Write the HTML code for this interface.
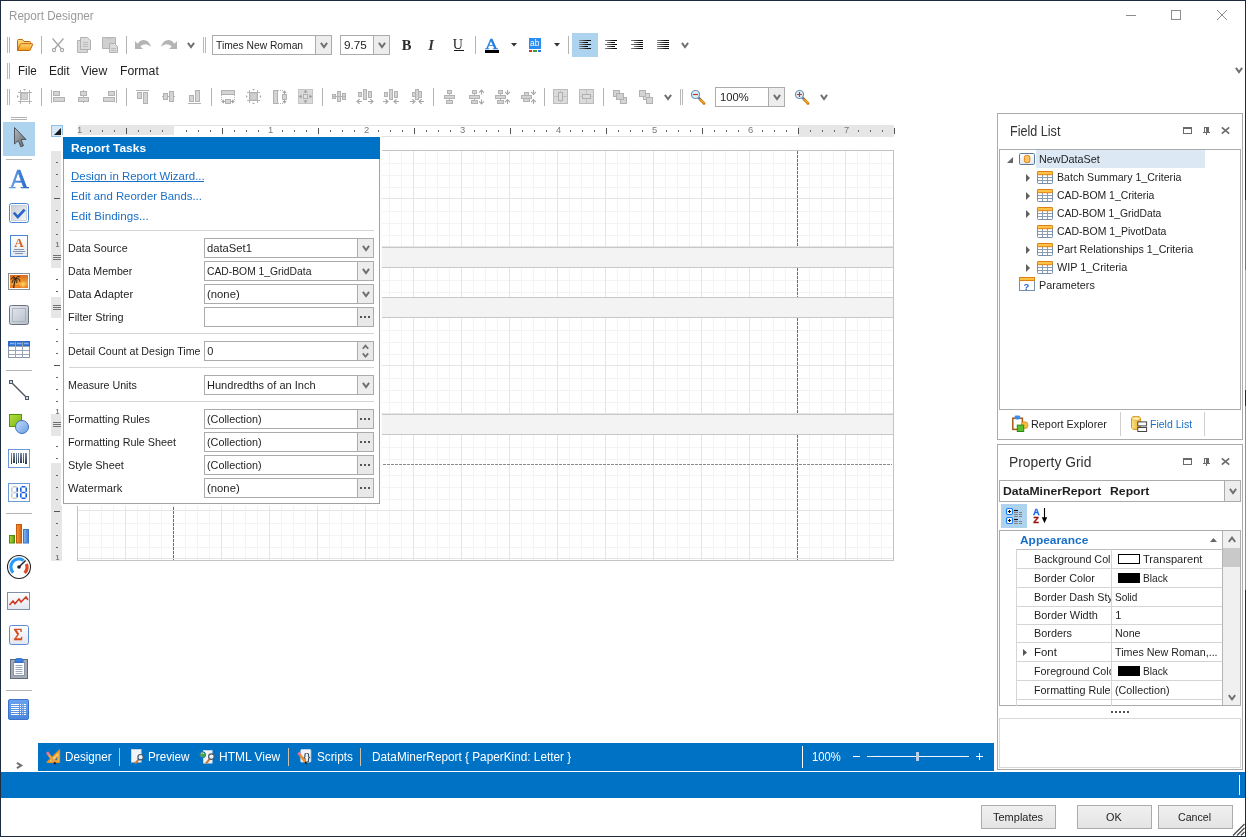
<!DOCTYPE html>
<html><head><meta charset="utf-8"><title>Report Designer</title>
<style>
html,body{margin:0;padding:0;}
body{width:1247px;height:837px;overflow:hidden;background:#fff;position:relative;font-family:"Liberation Sans",sans-serif;}
#root{position:absolute;left:0;top:0;width:1247px;height:837px;overflow:hidden;background:#fff;}
#root div,#root span,#root svg{position:absolute;box-sizing:border-box;}
#root svg{overflow:visible;}
</style></head><body><div id="root">
<div style="left:0px;top:0px;width:1247px;height:837px;background:#fff;"></div>
<div style="left:0px;top:0px;width:1246px;height:1px;background:#1c2b3e;"></div>
<div style="left:0px;top:0px;width:1px;height:837px;background:#1c2b3e;"></div>
<div style="left:1245px;top:0px;width:1px;height:837px;background:linear-gradient(180deg,#1c2b3e 0,#1c2b3e 200px,#4a82b8 200px,#4a82b8 270px,#9ab4cc 270px,#9ab4cc 390px,#1c2b3e 390px,#1c2b3e 406px,#6a9abf 406px,#6a9abf 590px,#1c2b3e 590px);"></div>
<div style="left:0px;top:836px;width:1246px;height:1px;background:#1c2b3e;"></div>
<span id="t0" style="left:8.90px;top:6.54px;font:400 12px/18px 'Liberation Sans',sans-serif;color:#999;white-space:pre;transform:scaleX(0.9694);transform-origin:0 0;">Report Designer</span>
<svg style="left:1126px;top:10px;" width="11" height="11" viewBox="0 0 11 11"><path d="M0 5.5H10" stroke="#8c8c8c" stroke-width="1" fill="none"/></svg>
<svg style="left:1171px;top:10px;" width="11" height="11" viewBox="0 0 11 11"><rect x="0.5" y="0.5" width="9" height="9" stroke="#8c8c8c" stroke-width="1" fill="none"/></svg>
<svg style="left:1217px;top:10px;" width="11" height="11" viewBox="0 0 11 11"><path d="M0 0L10 10M10 0L0 10" stroke="#8c8c8c" stroke-width="1" fill="none"/></svg>
<div style="left:7px;top:37px;width:1px;height:16px;background:#b8b8b8;"></div>
<div style="left:9px;top:37px;width:1px;height:16px;background:#b8b8b8;"></div>
<div style="left:41px;top:36px;width:1px;height:18px;background:#b4b4b4;"></div>
<div style="left:126px;top:36px;width:1px;height:18px;background:#b4b4b4;"></div>
<svg style="left:187px;top:42px;" width="8" height="7" viewBox="0 0 8 7"><path d="M0.9 0.9L4 5L7.1 0.9" stroke="#707070" stroke-width="2" fill="none"/></svg>
<div style="left:203px;top:37px;width:1px;height:16px;background:#b8b8b8;"></div>
<div style="left:205px;top:37px;width:1px;height:16px;background:#b8b8b8;"></div>
<div style="left:212px;top:35px;width:120px;height:20px;border:1px solid #ababab;background:#fff;"></div>
<div style="left:315px;top:35px;width:17px;height:20px;border:1px solid #ababab;background:#ededed;"></div>
<svg style="left:319.5px;top:41.6px;" width="8" height="7" viewBox="0 0 8 7"><path d="M0.9 0.9L4 5L7.1 0.9" stroke="#707070" stroke-width="2" fill="none"/></svg>
<span id="t1" style="left:216.15px;top:37.09px;font:400 11px/16px 'Liberation Sans',sans-serif;color:#1e1e1e;white-space:pre;transform:scaleX(0.9353);transform-origin:0 0;">Times New Roman</span>
<div style="left:340px;top:35px;width:50px;height:20px;border:1px solid #ababab;background:#fff;"></div>
<div style="left:373px;top:35px;width:17px;height:20px;border:1px solid #ababab;background:#ededed;"></div>
<svg style="left:377.5px;top:41.6px;" width="8" height="7" viewBox="0 0 8 7"><path d="M0.9 0.9L4 5L7.1 0.9" stroke="#707070" stroke-width="2" fill="none"/></svg>
<span id="t2" style="left:344.05px;top:37.09px;font:400 11px/16px 'Liberation Sans',sans-serif;color:#1e1e1e;white-space:pre;transform:scaleX(1.0690);transform-origin:0 0;">9.75</span>
<span id="t3" style="left:401.67px;top:34.11px;font:700 14.5px/22px 'Liberation Serif',serif;color:#2a2a2a;white-space:pre;">B</span>
<span id="t4" style="left:428.27px;top:34.11px;font:700 14.5px/22px 'Liberation Serif',serif;color:#333;white-space:pre;font-style:italic;">I</span>
<span id="t5" style="left:452.80px;top:34.27px;font:400 14px/21px 'Liberation Serif',serif;color:#1a1a1a;white-space:pre;">U</span>
<div style="left:454px;top:50px;width:10px;height:1px;background:#1a1a1a;"></div>
<div style="left:475px;top:36px;width:1px;height:18px;background:#b4b4b4;"></div>
<span id="t6" style="left:485.25px;top:32.64px;font:400 15px/22px 'Liberation Serif',serif;color:#1f7ae0;white-space:pre;transform:scaleX(1.2081);transform-origin:0 0;-webkit-text-stroke:0.35px #1f7ae0;">A</span>
<div style="left:485px;top:50px;width:14px;height:3px;background:#000;"></div>
<svg style="left:511px;top:43px;" width="6" height="4" viewBox="0 0 6 4"><path d="M0 0H6L3 3.5Z" fill="#333"/></svg>
<div style="left:529px;top:38px;width:12px;height:11px;background:#2a8cf0;"></div>
<span id="t7" style="left:530.18px;top:36.85px;font:400 8.5px/13px 'Liberation Sans',sans-serif;color:#fff;white-space:pre;transform:scaleX(0.9980);transform-origin:0 0;">ab</span>
<div style="left:529px;top:50px;width:3px;height:2px;background:#e03030;"></div>
<div style="left:533px;top:50px;width:4px;height:2px;background:#40a030;"></div>
<div style="left:538px;top:50px;width:3px;height:2px;background:#2a7ae0;"></div>
<svg style="left:553.5px;top:43px;" width="6" height="4" viewBox="0 0 6 4"><path d="M0 0H6L3 3.5Z" fill="#333"/></svg>
<div style="left:568px;top:36px;width:1px;height:18px;background:#b4b4b4;"></div>
<div style="left:572px;top:33px;width:26px;height:24px;background:#aed3ef;"></div>
<div style="left:579px;top:40px;width:12px;height:1px;background:linear-gradient(90deg,#8a8a8a,#111 70%);"></div>
<div style="left:579px;top:42px;width:9px;height:1px;background:linear-gradient(90deg,#8a8a8a,#111 70%);"></div>
<div style="left:579px;top:44px;width:12px;height:1px;background:linear-gradient(90deg,#8a8a8a,#111 70%);"></div>
<div style="left:579px;top:46px;width:9px;height:1px;background:linear-gradient(90deg,#8a8a8a,#111 70%);"></div>
<div style="left:579px;top:48px;width:12px;height:1px;background:linear-gradient(90deg,#8a8a8a,#111 70%);"></div>
<div style="left:605.0px;top:40px;width:12px;height:1px;background:linear-gradient(90deg,#8a8a8a,#111 70%);"></div>
<div style="left:607.0px;top:42px;width:8px;height:1px;background:linear-gradient(90deg,#8a8a8a,#111 70%);"></div>
<div style="left:605.0px;top:44px;width:12px;height:1px;background:linear-gradient(90deg,#8a8a8a,#111 70%);"></div>
<div style="left:607.0px;top:46px;width:8px;height:1px;background:linear-gradient(90deg,#8a8a8a,#111 70%);"></div>
<div style="left:605.0px;top:48px;width:12px;height:1px;background:linear-gradient(90deg,#8a8a8a,#111 70%);"></div>
<div style="left:631px;top:40px;width:12px;height:1px;background:linear-gradient(90deg,#8a8a8a,#111 70%);"></div>
<div style="left:634px;top:42px;width:9px;height:1px;background:linear-gradient(90deg,#8a8a8a,#111 70%);"></div>
<div style="left:631px;top:44px;width:12px;height:1px;background:linear-gradient(90deg,#8a8a8a,#111 70%);"></div>
<div style="left:634px;top:46px;width:9px;height:1px;background:linear-gradient(90deg,#8a8a8a,#111 70%);"></div>
<div style="left:631px;top:48px;width:12px;height:1px;background:linear-gradient(90deg,#8a8a8a,#111 70%);"></div>
<div style="left:657px;top:40px;width:12px;height:1px;background:linear-gradient(90deg,#8a8a8a,#111 70%);"></div>
<div style="left:657px;top:42px;width:12px;height:1px;background:linear-gradient(90deg,#8a8a8a,#111 70%);"></div>
<div style="left:657px;top:44px;width:12px;height:1px;background:linear-gradient(90deg,#8a8a8a,#111 70%);"></div>
<div style="left:657px;top:46px;width:12px;height:1px;background:linear-gradient(90deg,#8a8a8a,#111 70%);"></div>
<div style="left:657px;top:48px;width:12px;height:1px;background:linear-gradient(90deg,#8a8a8a,#111 70%);"></div>
<svg style="left:681px;top:42px;" width="8" height="7" viewBox="0 0 8 7"><path d="M0.9 0.9L4 5L7.1 0.9" stroke="#707070" stroke-width="2" fill="none"/></svg>
<svg style="left:1235px;top:67px;" width="8" height="7" viewBox="0 0 8 7"><path d="M0.9 0.9L4 5L7.1 0.9" stroke="#707070" stroke-width="2" fill="none"/></svg>
<div style="left:7px;top:63px;width:1px;height:16px;background:#b8b8b8;"></div>
<div style="left:9px;top:63px;width:1px;height:16px;background:#b8b8b8;"></div>
<span id="t8" style="left:17.80px;top:61.54px;font:400 12px/18px 'Liberation Sans',sans-serif;color:#1e1e1e;white-space:pre;transform:scaleX(0.9719);transform-origin:0 0;">File</span>
<span id="t9" style="left:48.70px;top:61.54px;font:400 12px/18px 'Liberation Sans',sans-serif;color:#1e1e1e;white-space:pre;transform:scaleX(0.9958);transform-origin:0 0;">Edit</span>
<span id="t10" style="left:81.40px;top:61.54px;font:400 12px/18px 'Liberation Sans',sans-serif;color:#1e1e1e;white-space:pre;transform:scaleX(1.0156);transform-origin:0 0;">View</span>
<span id="t11" style="left:119.80px;top:61.54px;font:400 12px/18px 'Liberation Sans',sans-serif;color:#1e1e1e;white-space:pre;transform:scaleX(1.0206);transform-origin:0 0;">Format</span>
<div style="left:7px;top:89px;width:1px;height:16px;background:#b8b8b8;"></div>
<div style="left:9px;top:89px;width:1px;height:16px;background:#b8b8b8;"></div>
<div style="left:41px;top:88px;width:1px;height:18px;background:#b4b4b4;"></div>
<div style="left:126px;top:88px;width:1px;height:18px;background:#b4b4b4;"></div>
<div style="left:211px;top:88px;width:1px;height:18px;background:#b4b4b4;"></div>
<div style="left:322px;top:88px;width:1px;height:18px;background:#b4b4b4;"></div>
<div style="left:433px;top:88px;width:1px;height:18px;background:#b4b4b4;"></div>
<div style="left:544px;top:88px;width:1px;height:18px;background:#b4b4b4;"></div>
<div style="left:603px;top:88px;width:1px;height:18px;background:#b4b4b4;"></div>
<svg style="left:664px;top:94px;" width="8" height="7" viewBox="0 0 8 7"><path d="M0.9 0.9L4 5L7.1 0.9" stroke="#707070" stroke-width="2" fill="none"/></svg>
<div style="left:680px;top:89px;width:1px;height:16px;background:#b8b8b8;"></div>
<div style="left:682px;top:89px;width:1px;height:16px;background:#b8b8b8;"></div>
<div style="left:715px;top:87px;width:70px;height:20px;border:1px solid #ababab;background:#fff;"></div>
<div style="left:768px;top:87px;width:17px;height:20px;border:1px solid #ababab;background:#ededed;"></div>
<svg style="left:772.5px;top:93.6px;" width="8" height="7" viewBox="0 0 8 7"><path d="M0.9 0.9L4 5L7.1 0.9" stroke="#707070" stroke-width="2" fill="none"/></svg>
<span id="t12" style="left:720.25px;top:89.09px;font:400 11px/16px 'Liberation Sans',sans-serif;color:#1e1e1e;white-space:pre;transform:scaleX(1.0199);transform-origin:0 0;">100%</span>
<svg style="left:820px;top:94px;" width="8" height="7" viewBox="0 0 8 7"><path d="M0.9 0.9L4 5L7.1 0.9" stroke="#707070" stroke-width="2" fill="none"/></svg>
<div style="left:11px;top:117px;width:16px;height:1px;background:#b0b0b0;"></div>
<div style="left:11px;top:119px;width:16px;height:1px;background:#b0b0b0;"></div>
<div style="left:3px;top:122px;width:32px;height:34px;background:#aed3ef;"></div>
<div style="left:6px;top:159px;width:26px;height:1px;background:#b4b4b4;"></div>
<div style="left:6px;top:370px;width:26px;height:1px;background:#b4b4b4;"></div>
<div style="left:6px;top:513px;width:26px;height:1px;background:#b4b4b4;"></div>
<div style="left:6px;top:690px;width:26px;height:1px;background:#b4b4b4;"></div>
<svg style="left:16px;top:762px;" width="7" height="7" viewBox="0 0 7 7"><path d="M0.9 0.9L5.2 3.5L0.9 6.1" stroke="#707070" stroke-width="2" fill="none"/></svg>
<div style="left:51px;top:125px;width:12px;height:12px;border:1px solid #8fc0ea;background:#d6e8f8;"></div>
<svg style="left:54px;top:128px;" width="7" height="7" viewBox="0 0 7 7"><path d="M7 0V7H0Z" fill="#1a1a1a"/></svg>
<div style="left:78px;top:125px;width:816px;height:12px;background:#fff;border-top:1px solid #e2e2e2;border-bottom:1px solid #e2e2e2;"></div>
<div style="left:78px;top:125px;width:96px;height:12px;background:#e6e6e6;"></div>
<div style="left:798px;top:125px;width:96px;height:12px;background:#e6e6e6;"></div>
<span id="t13" style="left:76.52px;top:123.27px;font:400 9.6px/14px 'Liberation Sans',sans-serif;color:#7a7a7a;white-space:pre;transform:scaleX(0.9843);transform-origin:0 0;">1</span>
<div style="left:90px;top:130px;width:1px;height:2px;background:#666;"></div>
<div style="left:102px;top:130px;width:1px;height:2px;background:#666;"></div>
<div style="left:114px;top:130px;width:1px;height:2px;background:#666;"></div>
<div style="left:126px;top:128px;width:1px;height:6px;background:#555;"></div>
<div style="left:138px;top:130px;width:1px;height:2px;background:#666;"></div>
<div style="left:150px;top:130px;width:1px;height:2px;background:#666;"></div>
<div style="left:162px;top:130px;width:1px;height:2px;background:#666;"></div>
<div style="left:186px;top:130px;width:1px;height:2px;background:#666;"></div>
<div style="left:198px;top:130px;width:1px;height:2px;background:#666;"></div>
<div style="left:210px;top:130px;width:1px;height:2px;background:#666;"></div>
<div style="left:222px;top:128px;width:1px;height:6px;background:#555;"></div>
<div style="left:234px;top:130px;width:1px;height:2px;background:#666;"></div>
<div style="left:246px;top:130px;width:1px;height:2px;background:#666;"></div>
<div style="left:258px;top:130px;width:1px;height:2px;background:#666;"></div>
<span id="t14" style="left:267.52px;top:123.27px;font:400 9.6px/14px 'Liberation Sans',sans-serif;color:#7a7a7a;white-space:pre;transform:scaleX(0.9843);transform-origin:0 0;">1</span>
<div style="left:282px;top:130px;width:1px;height:2px;background:#666;"></div>
<div style="left:294px;top:130px;width:1px;height:2px;background:#666;"></div>
<div style="left:306px;top:130px;width:1px;height:2px;background:#666;"></div>
<div style="left:318px;top:128px;width:1px;height:6px;background:#555;"></div>
<div style="left:330px;top:130px;width:1px;height:2px;background:#666;"></div>
<div style="left:342px;top:130px;width:1px;height:2px;background:#666;"></div>
<div style="left:354px;top:130px;width:1px;height:2px;background:#666;"></div>
<span id="t15" style="left:363.52px;top:123.27px;font:400 9.6px/14px 'Liberation Sans',sans-serif;color:#7a7a7a;white-space:pre;transform:scaleX(0.9843);transform-origin:0 0;">2</span>
<div style="left:378px;top:130px;width:1px;height:2px;background:#666;"></div>
<div style="left:390px;top:130px;width:1px;height:2px;background:#666;"></div>
<div style="left:402px;top:130px;width:1px;height:2px;background:#666;"></div>
<div style="left:414px;top:128px;width:1px;height:6px;background:#555;"></div>
<div style="left:426px;top:130px;width:1px;height:2px;background:#666;"></div>
<div style="left:438px;top:130px;width:1px;height:2px;background:#666;"></div>
<div style="left:450px;top:130px;width:1px;height:2px;background:#666;"></div>
<span id="t16" style="left:459.52px;top:123.27px;font:400 9.6px/14px 'Liberation Sans',sans-serif;color:#7a7a7a;white-space:pre;transform:scaleX(0.9843);transform-origin:0 0;">3</span>
<div style="left:474px;top:130px;width:1px;height:2px;background:#666;"></div>
<div style="left:486px;top:130px;width:1px;height:2px;background:#666;"></div>
<div style="left:498px;top:130px;width:1px;height:2px;background:#666;"></div>
<div style="left:510px;top:128px;width:1px;height:6px;background:#555;"></div>
<div style="left:522px;top:130px;width:1px;height:2px;background:#666;"></div>
<div style="left:534px;top:130px;width:1px;height:2px;background:#666;"></div>
<div style="left:546px;top:130px;width:1px;height:2px;background:#666;"></div>
<span id="t17" style="left:555.52px;top:123.27px;font:400 9.6px/14px 'Liberation Sans',sans-serif;color:#7a7a7a;white-space:pre;transform:scaleX(0.9843);transform-origin:0 0;">4</span>
<div style="left:570px;top:130px;width:1px;height:2px;background:#666;"></div>
<div style="left:582px;top:130px;width:1px;height:2px;background:#666;"></div>
<div style="left:594px;top:130px;width:1px;height:2px;background:#666;"></div>
<div style="left:606px;top:128px;width:1px;height:6px;background:#555;"></div>
<div style="left:618px;top:130px;width:1px;height:2px;background:#666;"></div>
<div style="left:630px;top:130px;width:1px;height:2px;background:#666;"></div>
<div style="left:642px;top:130px;width:1px;height:2px;background:#666;"></div>
<span id="t18" style="left:651.52px;top:123.27px;font:400 9.6px/14px 'Liberation Sans',sans-serif;color:#7a7a7a;white-space:pre;transform:scaleX(0.9843);transform-origin:0 0;">5</span>
<div style="left:666px;top:130px;width:1px;height:2px;background:#666;"></div>
<div style="left:678px;top:130px;width:1px;height:2px;background:#666;"></div>
<div style="left:690px;top:130px;width:1px;height:2px;background:#666;"></div>
<div style="left:702px;top:128px;width:1px;height:6px;background:#555;"></div>
<div style="left:714px;top:130px;width:1px;height:2px;background:#666;"></div>
<div style="left:726px;top:130px;width:1px;height:2px;background:#666;"></div>
<div style="left:738px;top:130px;width:1px;height:2px;background:#666;"></div>
<span id="t19" style="left:747.52px;top:123.27px;font:400 9.6px/14px 'Liberation Sans',sans-serif;color:#7a7a7a;white-space:pre;transform:scaleX(0.9843);transform-origin:0 0;">6</span>
<div style="left:762px;top:130px;width:1px;height:2px;background:#666;"></div>
<div style="left:774px;top:130px;width:1px;height:2px;background:#666;"></div>
<div style="left:786px;top:130px;width:1px;height:2px;background:#666;"></div>
<div style="left:798px;top:128px;width:1px;height:6px;background:#555;"></div>
<div style="left:810px;top:130px;width:1px;height:2px;background:#666;"></div>
<div style="left:822px;top:130px;width:1px;height:2px;background:#666;"></div>
<div style="left:834px;top:130px;width:1px;height:2px;background:#666;"></div>
<span id="t20" style="left:843.52px;top:123.27px;font:400 9.6px/14px 'Liberation Sans',sans-serif;color:#7a7a7a;white-space:pre;transform:scaleX(0.9843);transform-origin:0 0;">7</span>
<div style="left:858px;top:130px;width:1px;height:2px;background:#666;"></div>
<div style="left:870px;top:130px;width:1px;height:2px;background:#666;"></div>
<div style="left:882px;top:130px;width:1px;height:2px;background:#666;"></div>
<div style="left:894px;top:128px;width:1px;height:6px;background:#555;"></div>
<div style="left:894px;top:128px;width:1px;height:6px;background:#555;"></div>
<div style="left:77px;top:150px;width:817px;height:411px;background:repeating-linear-gradient(90deg,#e5e5e5 0,#e5e5e5 1px,transparent 1px,transparent 48px),repeating-linear-gradient(90deg,#f3f3f3 0,#f3f3f3 1px,transparent 1px,transparent 12px);background-color:#fff;"></div>
<div style="left:78px;top:163px;width:815px;height:1px;background:#f3f3f3;mix-blend-mode:darken;"></div>
<div style="left:78px;top:175px;width:815px;height:1px;background:#f3f3f3;mix-blend-mode:darken;"></div>
<div style="left:78px;top:187px;width:815px;height:1px;background:#f3f3f3;mix-blend-mode:darken;"></div>
<div style="left:78px;top:198px;width:815px;height:1px;background:#e5e5e5;mix-blend-mode:darken;"></div>
<div style="left:78px;top:211px;width:815px;height:1px;background:#f3f3f3;mix-blend-mode:darken;"></div>
<div style="left:78px;top:223px;width:815px;height:1px;background:#f3f3f3;mix-blend-mode:darken;"></div>
<div style="left:78px;top:235px;width:815px;height:1px;background:#f3f3f3;mix-blend-mode:darken;"></div>
<div style="left:78px;top:246px;width:815px;height:1px;background:#e5e5e5;mix-blend-mode:darken;"></div>
<div style="left:77px;top:247px;width:817px;height:21px;background:#f3f3f3;border-top:1px solid #c8c8c8;border-bottom:1px solid #c8c8c8;"></div>
<div style="left:78px;top:280px;width:815px;height:1px;background:#f3f3f3;mix-blend-mode:darken;"></div>
<div style="left:78px;top:292px;width:815px;height:1px;background:#f3f3f3;mix-blend-mode:darken;"></div>
<div style="left:77px;top:297px;width:817px;height:21px;background:#f3f3f3;border-top:1px solid #c8c8c8;border-bottom:1px solid #c8c8c8;"></div>
<div style="left:78px;top:330px;width:815px;height:1px;background:#f3f3f3;mix-blend-mode:darken;"></div>
<div style="left:78px;top:342px;width:815px;height:1px;background:#f3f3f3;mix-blend-mode:darken;"></div>
<div style="left:78px;top:354px;width:815px;height:1px;background:#f3f3f3;mix-blend-mode:darken;"></div>
<div style="left:78px;top:365px;width:815px;height:1px;background:#e5e5e5;mix-blend-mode:darken;"></div>
<div style="left:78px;top:378px;width:815px;height:1px;background:#f3f3f3;mix-blend-mode:darken;"></div>
<div style="left:78px;top:390px;width:815px;height:1px;background:#f3f3f3;mix-blend-mode:darken;"></div>
<div style="left:78px;top:402px;width:815px;height:1px;background:#f3f3f3;mix-blend-mode:darken;"></div>
<div style="left:78px;top:413px;width:815px;height:1px;background:#e5e5e5;mix-blend-mode:darken;"></div>
<div style="left:77px;top:414px;width:817px;height:21px;background:#f3f3f3;border-top:1px solid #c8c8c8;border-bottom:1px solid #c8c8c8;"></div>
<div style="left:78px;top:447px;width:815px;height:1px;background:#f3f3f3;mix-blend-mode:darken;"></div>
<div style="left:78px;top:459px;width:815px;height:1px;background:#f3f3f3;mix-blend-mode:darken;"></div>
<div style="left:78px;top:475px;width:815px;height:1px;background:#f3f3f3;mix-blend-mode:darken;"></div>
<div style="left:78px;top:487px;width:815px;height:1px;background:#f3f3f3;mix-blend-mode:darken;"></div>
<div style="left:78px;top:499px;width:815px;height:1px;background:#f3f3f3;mix-blend-mode:darken;"></div>
<div style="left:78px;top:510px;width:815px;height:1px;background:#e5e5e5;mix-blend-mode:darken;"></div>
<div style="left:78px;top:523px;width:815px;height:1px;background:#f3f3f3;mix-blend-mode:darken;"></div>
<div style="left:78px;top:535px;width:815px;height:1px;background:#f3f3f3;mix-blend-mode:darken;"></div>
<div style="left:78px;top:547px;width:815px;height:1px;background:#f3f3f3;mix-blend-mode:darken;"></div>
<div style="left:78px;top:558px;width:815px;height:1px;background:#e5e5e5;mix-blend-mode:darken;"></div>
<div style="left:77px;top:150px;width:817px;height:411px;border:1px solid #c4c4c4;"></div>
<div style="left:173px;top:151px;width:1px;height:96px;background:repeating-linear-gradient(180deg,#6e6e6e 0,#6e6e6e 3px,transparent 3px,transparent 4px);"></div>
<div style="left:797px;top:151px;width:1px;height:96px;background:repeating-linear-gradient(180deg,#6e6e6e 0,#6e6e6e 3px,transparent 3px,transparent 4px);"></div>
<div style="left:173px;top:268px;width:1px;height:29px;background:repeating-linear-gradient(180deg,#6e6e6e 0,#6e6e6e 3px,transparent 3px,transparent 4px);"></div>
<div style="left:797px;top:268px;width:1px;height:29px;background:repeating-linear-gradient(180deg,#6e6e6e 0,#6e6e6e 3px,transparent 3px,transparent 4px);"></div>
<div style="left:173px;top:318px;width:1px;height:96px;background:repeating-linear-gradient(180deg,#6e6e6e 0,#6e6e6e 3px,transparent 3px,transparent 4px);"></div>
<div style="left:797px;top:318px;width:1px;height:96px;background:repeating-linear-gradient(180deg,#6e6e6e 0,#6e6e6e 3px,transparent 3px,transparent 4px);"></div>
<div style="left:173px;top:435px;width:1px;height:125px;background:repeating-linear-gradient(180deg,#6e6e6e 0,#6e6e6e 3px,transparent 3px,transparent 4px);"></div>
<div style="left:797px;top:435px;width:1px;height:125px;background:repeating-linear-gradient(180deg,#6e6e6e 0,#6e6e6e 3px,transparent 3px,transparent 4px);"></div>
<div style="left:79px;top:464px;width:813px;height:1px;background:repeating-linear-gradient(90deg,#8a8a8a 0,#8a8a8a 3px,transparent 3px,transparent 4px);"></div>
<div style="left:51px;top:151px;width:11px;height:410px;background:#e6e6e6;"></div>
<div style="left:51px;top:268px;width:11px;height:29px;background:#fff;"></div>
<div style="left:51px;top:318px;width:11px;height:96px;background:#fff;"></div>
<div style="left:51px;top:436px;width:11px;height:27px;background:#fff;"></div>
<div style="left:56px;top:162px;width:2px;height:1px;background:#666;"></div>
<div style="left:56px;top:174px;width:2px;height:1px;background:#666;"></div>
<div style="left:56px;top:186px;width:2px;height:1px;background:#666;"></div>
<div style="left:54px;top:198px;width:6px;height:1px;background:#555;"></div>
<div style="left:56px;top:210px;width:2px;height:1px;background:#666;"></div>
<div style="left:56px;top:222px;width:2px;height:1px;background:#666;"></div>
<div style="left:56px;top:234px;width:2px;height:1px;background:#666;"></div>
<span id="t21" style="left:55.45px;top:239.57px;font:700 7px/10px 'Liberation Sans',sans-serif;color:#6f7a88;white-space:pre;">1</span>
<div style="left:56px;top:279px;width:2px;height:1px;background:#666;"></div>
<div style="left:56px;top:291px;width:2px;height:1px;background:#666;"></div>
<div style="left:56px;top:329px;width:2px;height:1px;background:#666;"></div>
<div style="left:56px;top:341px;width:2px;height:1px;background:#666;"></div>
<div style="left:56px;top:353px;width:2px;height:1px;background:#666;"></div>
<div style="left:54px;top:365px;width:6px;height:1px;background:#555;"></div>
<div style="left:56px;top:377px;width:2px;height:1px;background:#666;"></div>
<div style="left:56px;top:389px;width:2px;height:1px;background:#666;"></div>
<div style="left:56px;top:401px;width:2px;height:1px;background:#666;"></div>
<span id="t22" style="left:55.45px;top:406.57px;font:700 7px/10px 'Liberation Sans',sans-serif;color:#6f7a88;white-space:pre;">1</span>
<div style="left:56px;top:446px;width:2px;height:1px;background:#666;"></div>
<div style="left:56px;top:458px;width:2px;height:1px;background:#666;"></div>
<div style="left:56px;top:475px;width:2px;height:1px;background:#666;"></div>
<div style="left:56px;top:487px;width:2px;height:1px;background:#666;"></div>
<div style="left:56px;top:499px;width:2px;height:1px;background:#666;"></div>
<div style="left:54px;top:511px;width:6px;height:1px;background:#555;"></div>
<div style="left:56px;top:523px;width:2px;height:1px;background:#666;"></div>
<div style="left:56px;top:535px;width:2px;height:1px;background:#666;"></div>
<div style="left:56px;top:547px;width:2px;height:1px;background:#666;"></div>
<span id="t23" style="left:55.45px;top:552.57px;font:700 7px/10px 'Liberation Sans',sans-serif;color:#6f7a88;white-space:pre;">1</span>
<div style="left:53px;top:255px;width:8px;height:1px;background:#707070;"></div>
<div style="left:53px;top:257px;width:8px;height:1px;background:#707070;"></div>
<div style="left:53px;top:259px;width:8px;height:1px;background:#707070;"></div>
<div style="left:53px;top:305px;width:8px;height:1px;background:#707070;"></div>
<div style="left:53px;top:307px;width:8px;height:1px;background:#707070;"></div>
<div style="left:53px;top:309px;width:8px;height:1px;background:#707070;"></div>
<div style="left:53px;top:422px;width:8px;height:1px;background:#707070;"></div>
<div style="left:53px;top:424px;width:8px;height:1px;background:#707070;"></div>
<div style="left:53px;top:426px;width:8px;height:1px;background:#707070;"></div>
<div style="left:61px;top:135px;width:321px;height:371px;background:#fdfdfd;"></div>
<div style="left:63px;top:137px;width:317px;height:367px;background:#fff;border:1px solid #a2a2a2;"></div>
<div style="left:63px;top:137px;width:317px;height:22px;background:#0072c6;"></div>
<span id="t24" style="left:71.33px;top:140.02px;font:700 11.5px/17px 'Liberation Sans',sans-serif;color:#fff;white-space:pre;transform:scaleX(1.0435);transform-origin:0 0;">Report Tasks</span>
<span id="t25" style="left:70.65px;top:168.19px;font:400 11px/16px 'Liberation Sans',sans-serif;color:#1a6fc6;white-space:pre;transform:scaleX(1.0414);transform-origin:0 0;">Design in Report Wizard...</span>
<div style="left:71px;top:181px;width:133px;height:1px;background:#1a6fc6;"></div>
<span id="t26" style="left:70.65px;top:187.99px;font:400 11px/16px 'Liberation Sans',sans-serif;color:#1a6fc6;white-space:pre;transform:scaleX(1.0341);transform-origin:0 0;">Edit and Reorder Bands...</span>
<span id="t27" style="left:70.65px;top:207.59px;font:400 11px/16px 'Liberation Sans',sans-serif;color:#1a6fc6;white-space:pre;transform:scaleX(1.0589);transform-origin:0 0;">Edit Bindings...</span>
<div style="left:69px;top:230px;width:305px;height:1px;background:#d4d4d4;"></div>
<div style="left:69px;top:333px;width:305px;height:1px;background:#d4d4d4;"></div>
<div style="left:69px;top:367px;width:305px;height:1px;background:#d4d4d4;"></div>
<div style="left:69px;top:401px;width:305px;height:1px;background:#d4d4d4;"></div>
<span id="t28" style="left:68.15px;top:239.89px;font:400 11px/16px 'Liberation Sans',sans-serif;color:#1e1e1e;white-space:pre;transform:scaleX(0.9746);transform-origin:0 0;">Data Source</span>
<div style="left:204px;top:238px;width:170px;height:20px;border:1px solid #ababab;background:#fff;"></div>
<div style="left:357px;top:238px;width:17px;height:20px;border:1px solid #ababab;background:#ededed;"></div>
<svg style="left:361.5px;top:244.6px;" width="8" height="7" viewBox="0 0 8 7"><path d="M0.9 0.9L4 5L7.1 0.9" stroke="#707070" stroke-width="2" fill="none"/></svg>
<span id="t29" style="left:207.15px;top:239.89px;font:400 11px/16px 'Liberation Sans',sans-serif;color:#1e1e1e;white-space:pre;transform:scaleX(1.0194);transform-origin:0 0;">dataSet1</span>
<span id="t30" style="left:68.15px;top:262.89px;font:400 11px/16px 'Liberation Sans',sans-serif;color:#1e1e1e;white-space:pre;transform:scaleX(0.9649);transform-origin:0 0;">Data Member</span>
<div style="left:204px;top:261px;width:170px;height:20px;border:1px solid #ababab;background:#fff;"></div>
<div style="left:357px;top:261px;width:17px;height:20px;border:1px solid #ababab;background:#ededed;"></div>
<svg style="left:361.5px;top:267.6px;" width="8" height="7" viewBox="0 0 8 7"><path d="M0.9 0.9L4 5L7.1 0.9" stroke="#707070" stroke-width="2" fill="none"/></svg>
<span id="t31" style="left:207.15px;top:262.89px;font:400 11px/16px 'Liberation Sans',sans-serif;color:#1e1e1e;white-space:pre;transform:scaleX(0.9383);transform-origin:0 0;">CAD-BOM 1_GridData</span>
<span id="t32" style="left:68.15px;top:285.89px;font:400 11px/16px 'Liberation Sans',sans-serif;color:#1e1e1e;white-space:pre;transform:scaleX(1.0137);transform-origin:0 0;">Data Adapter</span>
<div style="left:204px;top:284px;width:170px;height:20px;border:1px solid #ababab;background:#fff;"></div>
<div style="left:357px;top:284px;width:17px;height:20px;border:1px solid #ababab;background:#ededed;"></div>
<svg style="left:361.5px;top:290.6px;" width="8" height="7" viewBox="0 0 8 7"><path d="M0.9 0.9L4 5L7.1 0.9" stroke="#707070" stroke-width="2" fill="none"/></svg>
<span id="t33" style="left:207.15px;top:285.89px;font:400 11px/16px 'Liberation Sans',sans-serif;color:#1e1e1e;white-space:pre;transform:scaleX(1.0284);transform-origin:0 0;">(none)</span>
<span id="t34" style="left:68.15px;top:308.89px;font:400 11px/16px 'Liberation Sans',sans-serif;color:#1e1e1e;white-space:pre;transform:scaleX(0.9884);transform-origin:0 0;">Filter String</span>
<div style="left:204px;top:307px;width:170px;height:20px;border:1px solid #ababab;background:#fff;"></div>
<div style="left:357px;top:307px;width:17px;height:20px;border:1px solid #ababab;background:#e9e9e9;"></div>
<div style="left:360px;top:316px;width:2px;height:2px;background:#555;"></div>
<div style="left:364px;top:316px;width:2px;height:2px;background:#555;"></div>
<div style="left:368px;top:316px;width:2px;height:2px;background:#555;"></div>
<span id="t35" style="left:68.15px;top:342.89px;font:400 11px/16px 'Liberation Sans',sans-serif;color:#1e1e1e;white-space:pre;transform:scaleX(0.9675);transform-origin:0 0;">Detail Count at Design Time</span>
<div style="left:204px;top:341px;width:170px;height:20px;border:1px solid #ababab;background:#fff;"></div>
<div style="left:357px;top:341px;width:17px;height:20px;border:1px solid #ababab;background:#e9e9e9;"></div>
<svg style="left:362px;top:344px;" width="7" height="14" viewBox="0 0 7 14"><path d="M0.8 4.8L3.5 1.6L6.2 4.8M0.8 9.4L3.5 12.6L6.2 9.4" stroke="#707070" stroke-width="1.7" fill="none"/></svg>
<span id="t36" style="left:207.15px;top:342.89px;font:400 11px/16px 'Liberation Sans',sans-serif;color:#1e1e1e;white-space:pre;">0</span>
<span id="t37" style="left:68.15px;top:376.89px;font:400 11px/16px 'Liberation Sans',sans-serif;color:#1e1e1e;white-space:pre;transform:scaleX(0.9701);transform-origin:0 0;">Measure Units</span>
<div style="left:204px;top:375px;width:170px;height:20px;border:1px solid #ababab;background:#fff;"></div>
<div style="left:357px;top:375px;width:17px;height:20px;border:1px solid #ababab;background:#ededed;"></div>
<svg style="left:361.5px;top:381.6px;" width="8" height="7" viewBox="0 0 8 7"><path d="M0.9 0.9L4 5L7.1 0.9" stroke="#707070" stroke-width="2" fill="none"/></svg>
<span id="t38" style="left:207.15px;top:376.89px;font:400 11px/16px 'Liberation Sans',sans-serif;color:#1e1e1e;white-space:pre;transform:scaleX(1.0032);transform-origin:0 0;">Hundredths of an Inch</span>
<span id="t39" style="left:68.15px;top:410.89px;font:400 11px/16px 'Liberation Sans',sans-serif;color:#1e1e1e;white-space:pre;transform:scaleX(0.9777);transform-origin:0 0;">Formatting Rules</span>
<div style="left:204px;top:409px;width:170px;height:20px;border:1px solid #ababab;background:#fff;"></div>
<div style="left:357px;top:409px;width:17px;height:20px;border:1px solid #ababab;background:#e9e9e9;"></div>
<div style="left:360px;top:418px;width:2px;height:2px;background:#555;"></div>
<div style="left:364px;top:418px;width:2px;height:2px;background:#555;"></div>
<div style="left:368px;top:418px;width:2px;height:2px;background:#555;"></div>
<span id="t40" style="left:207.15px;top:410.89px;font:400 11px/16px 'Liberation Sans',sans-serif;color:#1e1e1e;white-space:pre;transform:scaleX(0.9813);transform-origin:0 0;">(Collection)</span>
<span id="t41" style="left:68.15px;top:433.89px;font:400 11px/16px 'Liberation Sans',sans-serif;color:#1e1e1e;white-space:pre;transform:scaleX(0.9822);transform-origin:0 0;">Formatting Rule Sheet</span>
<div style="left:204px;top:432px;width:170px;height:20px;border:1px solid #ababab;background:#fff;"></div>
<div style="left:357px;top:432px;width:17px;height:20px;border:1px solid #ababab;background:#e9e9e9;"></div>
<div style="left:360px;top:441px;width:2px;height:2px;background:#555;"></div>
<div style="left:364px;top:441px;width:2px;height:2px;background:#555;"></div>
<div style="left:368px;top:441px;width:2px;height:2px;background:#555;"></div>
<span id="t42" style="left:207.15px;top:433.89px;font:400 11px/16px 'Liberation Sans',sans-serif;color:#1e1e1e;white-space:pre;transform:scaleX(0.9813);transform-origin:0 0;">(Collection)</span>
<span id="t43" style="left:68.15px;top:456.89px;font:400 11px/16px 'Liberation Sans',sans-serif;color:#1e1e1e;white-space:pre;transform:scaleX(0.9935);transform-origin:0 0;">Style Sheet</span>
<div style="left:204px;top:455px;width:170px;height:20px;border:1px solid #ababab;background:#fff;"></div>
<div style="left:357px;top:455px;width:17px;height:20px;border:1px solid #ababab;background:#e9e9e9;"></div>
<div style="left:360px;top:464px;width:2px;height:2px;background:#555;"></div>
<div style="left:364px;top:464px;width:2px;height:2px;background:#555;"></div>
<div style="left:368px;top:464px;width:2px;height:2px;background:#555;"></div>
<span id="t44" style="left:207.15px;top:456.89px;font:400 11px/16px 'Liberation Sans',sans-serif;color:#1e1e1e;white-space:pre;transform:scaleX(0.9813);transform-origin:0 0;">(Collection)</span>
<span id="t45" style="left:68.15px;top:479.89px;font:400 11px/16px 'Liberation Sans',sans-serif;color:#1e1e1e;white-space:pre;transform:scaleX(1.0173);transform-origin:0 0;">Watermark</span>
<div style="left:204px;top:478px;width:170px;height:20px;border:1px solid #ababab;background:#fff;"></div>
<div style="left:357px;top:478px;width:17px;height:20px;border:1px solid #ababab;background:#e9e9e9;"></div>
<div style="left:360px;top:487px;width:2px;height:2px;background:#555;"></div>
<div style="left:364px;top:487px;width:2px;height:2px;background:#555;"></div>
<div style="left:368px;top:487px;width:2px;height:2px;background:#555;"></div>
<span id="t46" style="left:207.15px;top:479.89px;font:400 11px/16px 'Liberation Sans',sans-serif;color:#1e1e1e;white-space:pre;transform:scaleX(1.0284);transform-origin:0 0;">(none)</span>
<div style="left:997px;top:113px;width:246px;height:327px;border:1px solid #ababab;background:#fff;"></div>
<span id="t47" style="left:1009.70px;top:120.65px;font:400 14px/21px 'Liberation Sans',sans-serif;color:#333;white-space:pre;transform:scaleX(0.8995);transform-origin:0 0;">Field List</span>
<div style="left:1183px;top:127px;width:9px;height:7px;border:1px solid #6a6a6a;border-top-width:2px;"></div>
<div style="left:1204px;top:127px;width:5px;height:6px;border:1px solid #6a6a6a;border-right-width:3px;border-bottom:none;"></div>
<div style="left:1203px;top:132px;width:7px;height:1px;background:#6a6a6a;"></div>
<div style="left:1206px;top:133px;width:1px;height:2px;background:#6a6a6a;"></div>
<svg style="left:1221px;top:127px;" width="9" height="7" viewBox="0 0 9 7"><path d="M0.8 0.3L8.2 6.7M8.2 0.3L0.8 6.7" stroke="#6a6a6a" stroke-width="1.6" fill="none"/></svg>
<div style="left:999px;top:149px;width:242px;height:261px;border:1px solid #ababab;background:#fff;"></div>
<div style="left:1036px;top:150px;width:169px;height:18px;background:#dce8f4;"></div>
<svg style="left:1007px;top:157px;" width="6" height="6" viewBox="0 0 6 6"><path d="M6 0V6H0Z" fill="#666"/></svg>
<span id="t48" style="left:1039.15px;top:150.89px;font:400 11px/16px 'Liberation Sans',sans-serif;color:#1e1e1e;white-space:pre;transform:scaleX(0.9860);transform-origin:0 0;">NewDataSet</span>
<span id="t49" style="left:1057.15px;top:168.89px;font:400 11px/16px 'Liberation Sans',sans-serif;color:#1e1e1e;white-space:pre;transform:scaleX(0.9643);transform-origin:0 0;">Batch Summary 1_Criteria</span>
<svg style="left:1026px;top:174.0px;" width="4" height="8" viewBox="0 0 4 8"><path d="M0 0L4 4L0 8Z" fill="#606060"/></svg>
<span id="t50" style="left:1057.15px;top:186.89px;font:400 11px/16px 'Liberation Sans',sans-serif;color:#1e1e1e;white-space:pre;transform:scaleX(0.9475);transform-origin:0 0;">CAD-BOM 1_Criteria</span>
<svg style="left:1026px;top:192.0px;" width="4" height="8" viewBox="0 0 4 8"><path d="M0 0L4 4L0 8Z" fill="#606060"/></svg>
<span id="t51" style="left:1057.15px;top:204.89px;font:400 11px/16px 'Liberation Sans',sans-serif;color:#1e1e1e;white-space:pre;transform:scaleX(0.9374);transform-origin:0 0;">CAD-BOM 1_GridData</span>
<svg style="left:1026px;top:210.0px;" width="4" height="8" viewBox="0 0 4 8"><path d="M0 0L4 4L0 8Z" fill="#606060"/></svg>
<span id="t52" style="left:1057.15px;top:222.89px;font:400 11px/16px 'Liberation Sans',sans-serif;color:#1e1e1e;white-space:pre;transform:scaleX(0.9518);transform-origin:0 0;">CAD-BOM 1_PivotData</span>
<span id="t53" style="left:1057.15px;top:240.89px;font:400 11px/16px 'Liberation Sans',sans-serif;color:#1e1e1e;white-space:pre;transform:scaleX(0.9720);transform-origin:0 0;">Part Relationships 1_Criteria</span>
<svg style="left:1026px;top:246.0px;" width="4" height="8" viewBox="0 0 4 8"><path d="M0 0L4 4L0 8Z" fill="#606060"/></svg>
<span id="t54" style="left:1057.15px;top:258.89px;font:400 11px/16px 'Liberation Sans',sans-serif;color:#1e1e1e;white-space:pre;transform:scaleX(0.9856);transform-origin:0 0;">WIP 1_Criteria</span>
<svg style="left:1026px;top:264.0px;" width="4" height="8" viewBox="0 0 4 8"><path d="M0 0L4 4L0 8Z" fill="#606060"/></svg>
<span id="t55" style="left:1039.15px;top:276.89px;font:400 11px/16px 'Liberation Sans',sans-serif;color:#1e1e1e;white-space:pre;transform:scaleX(0.9814);transform-origin:0 0;">Parameters</span>
<div style="left:1120px;top:412px;width:1px;height:24px;background:#cfcfcf;"></div>
<div style="left:1204px;top:412px;width:1px;height:24px;background:#cfcfcf;"></div>
<span id="t56" style="left:1031.45px;top:415.89px;font:400 11px/16px 'Liberation Sans',sans-serif;color:#1e1e1e;white-space:pre;transform:scaleX(0.9851);transform-origin:0 0;">Report Explorer</span>
<span id="t57" style="left:1150.05px;top:415.89px;font:400 11px/16px 'Liberation Sans',sans-serif;color:#1a6fc6;white-space:pre;transform:scaleX(0.9561);transform-origin:0 0;">Field List</span>
<div style="left:997px;top:444px;width:246px;height:326px;border:1px solid #ababab;background:#fff;"></div>
<span id="t58" style="left:1009.30px;top:451.65px;font:400 14px/21px 'Liberation Sans',sans-serif;color:#333;white-space:pre;transform:scaleX(0.9898);transform-origin:0 0;">Property Grid</span>
<div style="left:1183px;top:458px;width:9px;height:7px;border:1px solid #6a6a6a;border-top-width:2px;"></div>
<div style="left:1204px;top:458px;width:5px;height:6px;border:1px solid #6a6a6a;border-right-width:3px;border-bottom:none;"></div>
<div style="left:1203px;top:463px;width:7px;height:1px;background:#6a6a6a;"></div>
<div style="left:1206px;top:464px;width:1px;height:2px;background:#6a6a6a;"></div>
<svg style="left:1221px;top:458px;" width="9" height="7" viewBox="0 0 9 7"><path d="M0.8 0.3L8.2 6.7M8.2 0.3L0.8 6.7" stroke="#6a6a6a" stroke-width="1.6" fill="none"/></svg>
<div style="left:999px;top:480px;width:242px;height:22px;border:1px solid #ababab;background:#fff;"></div>
<div style="left:1224px;top:480px;width:17px;height:22px;border:1px solid #ababab;background:#ededed;"></div>
<svg style="left:1228.5px;top:487.6px;" width="8" height="7" viewBox="0 0 8 7"><path d="M0.9 0.9L4 5L7.1 0.9" stroke="#707070" stroke-width="2" fill="none"/></svg>
<span id="t59" style="left:1002.85px;top:483.09px;font:700 11px/16px 'Liberation Sans',sans-serif;color:#1e1e1e;white-space:pre;transform:scaleX(1.1092);transform-origin:0 0;">DataMinerReport</span>
<span id="t60" style="left:1109.95px;top:483.09px;font:700 11px/16px 'Liberation Sans',sans-serif;color:#1e1e1e;white-space:pre;transform:scaleX(1.1113);transform-origin:0 0;">Report</span>
<div style="left:1001px;top:504px;width:26px;height:24px;background:#aed3ef;"></div>
<div style="left:999px;top:530px;width:242px;height:176px;border:1px solid #ababab;background:#fff;overflow:hidden;"></div>
<div style="left:1222px;top:531px;width:18px;height:174px;background:#f0f0f0;border-left:1px solid #b4b4b4;"></div>
<div style="left:1223px;top:548px;width:17px;height:19px;background:#c9c9c9;"></div>
<svg style="left:1227.5px;top:535.5px;" width="8" height="7" viewBox="0 0 8 7"><path d="M0.8 5.8L4 1.6L7.2 5.8" stroke="#707070" stroke-width="1.9" fill="none"/></svg>
<svg style="left:1227.5px;top:693.5px;" width="8" height="7" viewBox="0 0 8 7"><path d="M0.8 1.2L4 5.4L7.2 1.2" stroke="#707070" stroke-width="1.9" fill="none"/></svg>
<span id="t61" style="left:1020.05px;top:531.69px;font:700 11px/16px 'Liberation Sans',sans-serif;color:#1a6fc6;white-space:pre;transform:scaleX(1.0844);transform-origin:0 0;">Appearance</span>
<svg style="left:1210px;top:538px;" width="7" height="4" viewBox="0 0 7 4"><path d="M0 4H7L3.5 0Z" fill="#666"/></svg>
<div style="left:1016px;top:549px;width:206px;height:1px;background:#bdbdbd;"></div>
<div style="left:1016px;top:568px;width:206px;height:1px;background:#d4d4d4;"></div>
<div style="left:1016px;top:587px;width:206px;height:1px;background:#d4d4d4;"></div>
<div style="left:1016px;top:606px;width:206px;height:1px;background:#d4d4d4;"></div>
<div style="left:1016px;top:624px;width:206px;height:1px;background:#d4d4d4;"></div>
<div style="left:1016px;top:642px;width:206px;height:1px;background:#d4d4d4;"></div>
<div style="left:1016px;top:661px;width:206px;height:1px;background:#d4d4d4;"></div>
<div style="left:1016px;top:680px;width:206px;height:1px;background:#d4d4d4;"></div>
<div style="left:1016px;top:699px;width:206px;height:1px;background:#d4d4d4;"></div>
<div style="left:1016px;top:549px;width:1px;height:157px;background:#d4d4d4;"></div>
<div style="left:1111px;top:549px;width:1px;height:157px;background:#d4d4d4;"></div>
<div style="left:1017px;top:550px;width:94px;height:18px;overflow:hidden;">
<span id="t62" style="left:16.65px;top:1.19px;font:400 11px/16px 'Liberation Sans',sans-serif;color:#1e1e1e;white-space:pre;transform:scaleX(0.9775);transform-origin:0 0;">Background Color</span>
</div>
<div style="left:1112px;top:550px;width:110px;height:18px;overflow:hidden;">
<div style="left:6px;top:4px;width:22px;height:10px;background:#fff;border:1px solid #000;"></div>
<span id="t63" style="left:31.25px;top:1.19px;font:400 11px/16px 'Liberation Sans',sans-serif;color:#1e1e1e;white-space:pre;transform:scaleX(1.0084);transform-origin:0 0;">Transparent</span>
</div>
<div style="left:1017px;top:569px;width:94px;height:18px;overflow:hidden;">
<span id="t64" style="left:16.65px;top:1.09px;font:400 11px/16px 'Liberation Sans',sans-serif;color:#1e1e1e;white-space:pre;transform:scaleX(0.9750);transform-origin:0 0;">Border Color</span>
</div>
<div style="left:1112px;top:569px;width:110px;height:18px;overflow:hidden;">
<div style="left:6px;top:4px;width:22px;height:10px;background:#000;border:1px solid #000;"></div>
<span id="t65" style="left:31.25px;top:1.09px;font:400 11px/16px 'Liberation Sans',sans-serif;color:#1e1e1e;white-space:pre;transform:scaleX(0.9254);transform-origin:0 0;">Black</span>
</div>
<div style="left:1017px;top:588px;width:94px;height:18px;overflow:hidden;">
<span id="t66" style="left:16.65px;top:0.89px;font:400 11px/16px 'Liberation Sans',sans-serif;color:#1e1e1e;white-space:pre;transform:scaleX(0.9773);transform-origin:0 0;">Border Dash Style</span>
</div>
<div style="left:1112px;top:588px;width:110px;height:18px;overflow:hidden;">
<span id="t67" style="left:3.25px;top:0.89px;font:400 11px/16px 'Liberation Sans',sans-serif;color:#1e1e1e;white-space:pre;transform:scaleX(0.9155);transform-origin:0 0;">Solid</span>
</div>
<div style="left:1017px;top:607px;width:94px;height:17px;overflow:hidden;">
<span id="t68" style="left:16.65px;top:-0.01px;font:400 11px/16px 'Liberation Sans',sans-serif;color:#1e1e1e;white-space:pre;transform:scaleX(0.9937);transform-origin:0 0;">Border Width</span>
</div>
<div style="left:1112px;top:607px;width:110px;height:17px;overflow:hidden;">
<span id="t69" style="left:3.25px;top:-0.01px;font:400 11px/16px 'Liberation Sans',sans-serif;color:#1e1e1e;white-space:pre;">1</span>
</div>
<div style="left:1017px;top:625px;width:94px;height:17px;overflow:hidden;">
<span id="t70" style="left:16.65px;top:-0.11px;font:400 11px/16px 'Liberation Sans',sans-serif;color:#1e1e1e;white-space:pre;transform:scaleX(0.9862);transform-origin:0 0;">Borders</span>
</div>
<div style="left:1112px;top:625px;width:110px;height:17px;overflow:hidden;">
<span id="t71" style="left:3.25px;top:-0.11px;font:400 11px/16px 'Liberation Sans',sans-serif;color:#1e1e1e;white-space:pre;transform:scaleX(0.9697);transform-origin:0 0;">None</span>
</div>
<div style="left:1017px;top:643px;width:94px;height:18px;overflow:hidden;">
<span id="t72" style="left:16.65px;top:1.19px;font:400 11px/16px 'Liberation Sans',sans-serif;color:#1e1e1e;white-space:pre;transform:scaleX(1.0356);transform-origin:0 0;">Font</span>
</div>
<div style="left:1112px;top:643px;width:110px;height:18px;overflow:hidden;">
<span id="t73" style="left:3.25px;top:1.19px;font:400 11px/16px 'Liberation Sans',sans-serif;color:#1e1e1e;white-space:pre;transform:scaleX(0.9740);transform-origin:0 0;">Times New Roman,...</span>
</div>
<div style="left:1017px;top:662px;width:94px;height:18px;overflow:hidden;">
<span id="t74" style="left:16.65px;top:0.79px;font:400 11px/16px 'Liberation Sans',sans-serif;color:#1e1e1e;white-space:pre;transform:scaleX(0.9778);transform-origin:0 0;">Foreground Color</span>
</div>
<div style="left:1112px;top:662px;width:110px;height:18px;overflow:hidden;">
<div style="left:6px;top:4px;width:22px;height:10px;background:#000;border:1px solid #000;"></div>
<span id="t75" style="left:31.25px;top:0.79px;font:400 11px/16px 'Liberation Sans',sans-serif;color:#1e1e1e;white-space:pre;transform:scaleX(0.9254);transform-origin:0 0;">Black</span>
</div>
<div style="left:1017px;top:681px;width:94px;height:18px;overflow:hidden;">
<span id="t76" style="left:16.65px;top:0.69px;font:400 11px/16px 'Liberation Sans',sans-serif;color:#1e1e1e;white-space:pre;transform:scaleX(0.9777);transform-origin:0 0;">Formatting Rules</span>
</div>
<div style="left:1112px;top:681px;width:110px;height:18px;overflow:hidden;">
<span id="t77" style="left:3.25px;top:0.69px;font:400 11px/16px 'Liberation Sans',sans-serif;color:#1e1e1e;white-space:pre;transform:scaleX(0.9795);transform-origin:0 0;">(Collection)</span>
</div>
<div style="left:1017px;top:700px;width:94px;height:5px;overflow:hidden;">
<span id="t78" style="left:16.65px;top:1.79px;font:400 11px/16px 'Liberation Sans',sans-serif;color:#1e1e1e;white-space:pre;transform:scaleX(0.9822);transform-origin:0 0;">Formatting Rule Sheet</span>
</div>
<div style="left:1112px;top:700px;width:110px;height:5px;overflow:hidden;">
<span id="t79" style="left:3.25px;top:1.79px;font:400 11px/16px 'Liberation Sans',sans-serif;color:#1e1e1e;white-space:pre;transform:scaleX(0.9795);transform-origin:0 0;">(Collection)</span>
</div>
<svg style="left:1023px;top:649px;" width="4" height="7" viewBox="0 0 4 7"><path d="M0 0L4 3.5L0 7Z" fill="#555"/></svg>
<div style="left:1111px;top:711px;width:2px;height:2px;background:#555;"></div>
<div style="left:1115px;top:711px;width:2px;height:2px;background:#555;"></div>
<div style="left:1119px;top:711px;width:2px;height:2px;background:#555;"></div>
<div style="left:1123px;top:711px;width:2px;height:2px;background:#555;"></div>
<div style="left:1127px;top:711px;width:2px;height:2px;background:#555;"></div>
<div style="left:999px;top:718px;width:242px;height:50px;border:1px solid #d8d8d8;background:#fff;"></div>
<div style="left:38px;top:743px;width:956px;height:28px;background:#0072c6;"></div>
<div style="left:1px;top:772px;width:1244px;height:26px;background:#0072c6;"></div>
<span id="t80" style="left:64.90px;top:747.74px;font:400 12px/18px 'Liberation Sans',sans-serif;color:#fff;white-space:pre;transform:scaleX(0.9723);transform-origin:0 0;">Designer</span>
<div style="left:119px;top:748px;width:1px;height:18px;background:#cdbfa9;"></div>
<span id="t81" style="left:147.90px;top:747.74px;font:400 12px/18px 'Liberation Sans',sans-serif;color:#fff;white-space:pre;transform:scaleX(0.9722);transform-origin:0 0;">Preview</span>
<span id="t82" style="left:219.20px;top:747.74px;font:400 12px/18px 'Liberation Sans',sans-serif;color:#fff;white-space:pre;transform:scaleX(0.9974);transform-origin:0 0;">HTML View</span>
<div style="left:288px;top:748px;width:1px;height:18px;background:#cdbfa9;"></div>
<span id="t83" style="left:316.70px;top:747.74px;font:400 12px/18px 'Liberation Sans',sans-serif;color:#fff;white-space:pre;transform:scaleX(0.9785);transform-origin:0 0;">Scripts</span>
<div style="left:360px;top:748px;width:1px;height:18px;background:#cdbfa9;"></div>
<span id="t84" style="left:372.40px;top:747.74px;font:400 12px/18px 'Liberation Sans',sans-serif;color:#fff;white-space:pre;transform:scaleX(0.9823);transform-origin:0 0;">DataMinerReport { PaperKind: Letter }</span>
<div style="left:802px;top:746px;width:1px;height:22px;background:#ffffff;"></div>
<span id="t85" style="left:812.00px;top:747.74px;font:400 12px/18px 'Liberation Sans',sans-serif;color:#fff;white-space:pre;transform:scaleX(0.9380);transform-origin:0 0;">100%</span>
<div style="left:853px;top:756px;width:7px;height:1px;background:#fff;"></div>
<div style="left:867px;top:756px;width:102px;height:1px;background:#f0f6fb;"></div>
<div style="left:916px;top:752px;width:3px;height:9px;background:#b8d0e8;"></div>
<div style="left:976px;top:756px;width:7px;height:1px;background:#fff;"></div>
<div style="left:979px;top:753px;width:1px;height:7px;background:#fff;"></div>
<div style="left:1239px;top:775px;width:1px;height:20px;background:#fff;"></div>
<div style="left:981px;top:805px;width:75px;height:24px;border:1px solid #ababab;background:linear-gradient(#f0f0f0,#e4e4e4);"></div>
<span id="t86" style="left:992.75px;top:808.79px;font:400 11px/16px 'Liberation Sans',sans-serif;color:#1e1e1e;white-space:pre;transform:scaleX(0.9992);transform-origin:0 0;">Templates</span>
<div style="left:1077px;top:805px;width:75px;height:24px;border:1px solid #ababab;background:linear-gradient(#f0f0f0,#e4e4e4);"></div>
<span id="t87" style="left:1105.85px;top:808.79px;font:400 11px/16px 'Liberation Sans',sans-serif;color:#1e1e1e;white-space:pre;transform:scaleX(0.9870);transform-origin:0 0;">OK</span>
<div style="left:1158px;top:805px;width:75px;height:24px;border:1px solid #ababab;background:linear-gradient(#f0f0f0,#e4e4e4);"></div>
<span id="t88" style="left:1177.75px;top:808.79px;font:400 11px/16px 'Liberation Sans',sans-serif;color:#1e1e1e;white-space:pre;transform:scaleX(0.9664);transform-origin:0 0;">Cancel</span>
<svg style="left:1232px;top:823px;" width="13" height="13" viewBox="0 0 13 13"><path d="M1 12.5L12.5 1M5 12.5L12.5 5M9 12.5L12.5 9" stroke="#4a4a4a" stroke-width="1.3" fill="none"/></svg>
<svg style="left:0;top:0;" width="1247" height="837" viewBox="0 0 1247 837"><defs><linearGradient id="gFold" x1="0" y1="0" x2="0" y2="1"><stop offset="0" stop-color="#ffe08a"/><stop offset="1" stop-color="#f7a722"/></linearGradient><linearGradient id="gFold2" x1="0" y1="0" x2="0" y2="1"><stop offset="0" stop-color="#ffd978"/><stop offset="1" stop-color="#f59a14"/></linearGradient><linearGradient id="gPtr" x1="0" y1="0" x2="1" y2="1"><stop offset="0" stop-color="#b4bac0"/><stop offset="1" stop-color="#5e646a"/></linearGradient><linearGradient id="gA" x1="0" y1="0" x2="1" y2="0"><stop offset="0" stop-color="#6aa6ec"/><stop offset="1" stop-color="#1f5fc4"/></linearGradient><linearGradient id="gGray" x1="0" y1="0" x2="1" y2="1"><stop offset="0" stop-color="#e8ebf0"/><stop offset="1" stop-color="#b4bcc8"/></linearGradient><linearGradient id="gChk" x1="0" y1="0" x2="1" y2="1"><stop offset="0" stop-color="#c8ced8"/><stop offset="1" stop-color="#f4f6f8"/></linearGradient><linearGradient id="gSky" x1="0" y1="0" x2="0" y2="1"><stop offset="0" stop-color="#dc6a1c"/><stop offset="0.7" stop-color="#f4a43c"/><stop offset="0.8" stop-color="#f08a28"/><stop offset="1" stop-color="#ec7a20"/></linearGradient><linearGradient id="gGreen" x1="0" y1="0" x2="1" y2="1"><stop offset="0" stop-color="#b4e040"/><stop offset="1" stop-color="#78b414"/></linearGradient><linearGradient id="gBlueC" x1="0" y1="0" x2="1" y2="1"><stop offset="0" stop-color="#c4dcf8"/><stop offset="1" stop-color="#6a9ee4"/></linearGradient><linearGradient id="gOr" x1="0" y1="0" x2="1" y2="0"><stop offset="0" stop-color="#f09a3c"/><stop offset="1" stop-color="#d8600c"/></linearGradient><linearGradient id="gBl" x1="0" y1="0" x2="1" y2="0"><stop offset="0" stop-color="#8ab8f0"/><stop offset="1" stop-color="#3a7ad8"/></linearGradient><linearGradient id="gGr" x1="0" y1="0" x2="1" y2="0"><stop offset="0" stop-color="#b0dc3c"/><stop offset="1" stop-color="#5c9c10"/></linearGradient><linearGradient id="gPane" x1="0" y1="0" x2="0" y2="1"><stop offset="0" stop-color="#ffffff"/><stop offset="1" stop-color="#e2e6ee"/></linearGradient><linearGradient id="gToc" x1="0" y1="0" x2="0" y2="1"><stop offset="0" stop-color="#6aa2ee"/><stop offset="1" stop-color="#4a86dc"/></linearGradient><linearGradient id="gBar" x1="0" y1="0" x2="0" y2="1"><stop offset="0" stop-color="#7a8aa0"/><stop offset="1" stop-color="#2a3a50"/></linearGradient><radialGradient id="gSun" cx="0.5" cy="0.5" r="0.5"><stop offset="0" stop-color="#ffe27a" stop-opacity="0.9"/><stop offset="1" stop-color="#ffc850" stop-opacity="0"/></radialGradient></defs><path d="M17.5 50.5V40.5Q17.5 39.5 18.5 39.5H22.5L24 41.5H29.5Q30.5 41.5 30.5 42.5V44" fill="url(#gFold)" stroke="#c4680e" stroke-width="1" /><path d="M17.5 50.5L20.3 44.5Q20.6 43.7 21.5 43.7H32Q33 43.7 32.6 44.7L30.2 50Q30 50.5 29.3 50.5Z" fill="url(#gFold2)" stroke="#c4680e" stroke-width="1" /><path d="M52.5 38.5L61.2 48.5M63.5 38.5L54.8 48.5" fill="none" stroke="#a4a4a4" stroke-width="1.2" /><circle cx="54" cy="50" r="1.6" fill="none" stroke="#a4a4a4" stroke-width="1.1"/><circle cx="62" cy="50" r="1.6" fill="none" stroke="#a4a4a4" stroke-width="1.1"/><path d="M77.5 40.5H84.5L87.5 43.5V52.5H77.5Z" fill="#d8d8d8" stroke="#b4b4b4" stroke-width="1" /><path d="M80.5 37.5H87.5L90.5 40.5V49.5H80.5Z" fill="#dcdcdc" stroke="#b0b0b0" stroke-width="1" /><path d="M83 42.5H88M83 44.5H88M83 46.5H88" fill="none" stroke="#bcbcbc" stroke-width="1" /><path d="M102.5 37.5H115.5V48.5H102.5Z" fill="#d0d0d0" stroke="#b4b4b4" stroke-width="1" /><path d="M106.5 37.5H111.5V39H106.5Z" fill="#c0c0c0" stroke="none" stroke-width="1" /><path d="M109.5 43.5H114.5L117.5 46.5V52.5H109.5Z" fill="#dcdcdc" stroke="#b0b0b0" stroke-width="1" /><path d="M111 48.5H116M111 50.5H116" fill="none" stroke="#bcbcbc" stroke-width="1" /><path d="M135 41V49H143L140.2 46.3Q146 41.8 151 46.8Q149 40 143.6 40Q140 40 137.7 43.7Z" fill="#b4b4b4" stroke="none" stroke-width="1" /><path d="M177 41V49H169L171.8 46.3Q166 41.8 161 46.8Q163 40 168.4 40Q172 40 174.3 43.7Z" fill="#b4b4b4" stroke="none" stroke-width="1" /><path d="M20.5 90V104M29.5 90V104M18 92.5H32M18 101.5H32" fill="none" stroke="#b4b4b4" stroke-width="1" /><rect x="21.5" y="93.5" width="6" height="6" fill="#d0d0d0" stroke="#c0c0c0"/><path d="M23 89H26L24.5 90.8Z M17 95V98L18.8 96.5Z" fill="#a8a8a8" stroke="none" stroke-width="1" /><path d="M51.5 90L51.5 103" stroke="#b2b2b2" stroke-width="1" fill="none"/><rect x="53.5" y="91.5" width="6" height="4" fill="#d4d4d4" stroke="#b2b2b2"/><rect x="53.5" y="97.5" width="11" height="4" fill="#d4d4d4" stroke="#b2b2b2"/><path d="M83.5 90L83.5 103" stroke="#b2b2b2" stroke-width="1" fill="none"/><rect x="80.5" y="91.5" width="6" height="4" fill="#d4d4d4" stroke="#b2b2b2"/><rect x="78.5" y="97.5" width="10" height="4" fill="#d4d4d4" stroke="#b2b2b2"/><path d="M116.5 90L116.5 103" stroke="#b2b2b2" stroke-width="1" fill="none"/><rect x="108.5" y="91.5" width="6" height="4" fill="#d4d4d4" stroke="#b2b2b2"/><rect x="103.5" y="97.5" width="11" height="4" fill="#d4d4d4" stroke="#b2b2b2"/><path d="M136 90.5L149 90.5" stroke="#b2b2b2" stroke-width="1" fill="none"/><rect x="137.5" y="92.5" width="4" height="6" fill="#d4d4d4" stroke="#b2b2b2"/><rect x="143.5" y="92.5" width="4" height="11" fill="#d4d4d4" stroke="#b2b2b2"/><path d="M162 96.5L175 96.5" stroke="#b2b2b2" stroke-width="1" fill="none"/><rect x="163.5" y="93.5" width="4" height="6" fill="#d4d4d4" stroke="#b2b2b2"/><rect x="169.5" y="91.5" width="4" height="10" fill="#d4d4d4" stroke="#b2b2b2"/><path d="M188 103.5L201 103.5" stroke="#b2b2b2" stroke-width="1" fill="none"/><rect x="189.5" y="95.5" width="4" height="6" fill="#d4d4d4" stroke="#b2b2b2"/><rect x="195.5" y="90.5" width="4" height="11" fill="#d4d4d4" stroke="#b2b2b2"/><rect x="221.5" y="90.5" width="13" height="4" fill="#d4d4d4" stroke="#b2b2b2"/><path d="M221.5 95V101M234.5 95V101" fill="none" stroke="#b4b4b4" stroke-width="1" stroke-dasharray="1 1"/><rect x="225.5" y="99.5" width="5" height="4" fill="#d4d4d4" stroke="#b2b2b2"/><path d="M225 101.5H222.5" fill="none" stroke="#a2a2a2" stroke-width="1" /><path d="M221.2 101.5L223.9 99.3V103.7Z" fill="#a2a2a2" stroke="none" stroke-width="1" /><path d="M231 101.5H233.5" fill="none" stroke="#a2a2a2" stroke-width="1" /><path d="M234.8 101.5L232.1 99.3V103.7Z" fill="#a2a2a2" stroke="none" stroke-width="1" /><path d="M249.5 90V103M257.5 90V103M247 92.5H260M247 100.5H260" fill="none" stroke="#b4b4b4" stroke-width="1" /><rect x="250.5" y="93.5" width="6" height="6" fill="#d0d0d0" stroke="#c4c4c4"/><path d="M252 89H255L253.5 90.6Z M252 104H255L253.5 102.4Z M246 95V98L247.6 96.5Z M261 95V98L259.4 96.5Z" fill="#a8a8a8" stroke="none" stroke-width="1" /><rect x="273.5" y="90.5" width="4" height="13" fill="#d4d4d4" stroke="#b2b2b2"/><path d="M278 90.5H284M278 103.5H284" fill="none" stroke="#b4b4b4" stroke-width="1" stroke-dasharray="1 1"/><rect x="282.5" y="94.5" width="4" height="5" fill="#d4d4d4" stroke="#b2b2b2"/><path d="M284.5 94V91.5" fill="none" stroke="#a2a2a2" stroke-width="1" /><path d="M284.5 90.2L282.3 92.9H286.7Z" fill="#a2a2a2" stroke="none" stroke-width="1" /><path d="M284.5 100V102.5" fill="none" stroke="#a2a2a2" stroke-width="1" /><path d="M284.5 103.8L282.3 101.1H286.7Z" fill="#a2a2a2" stroke="none" stroke-width="1" /><rect x="298.5" y="89.5" width="14" height="14" fill="#dadada" stroke="#c4c4c4"/><rect x="303.5" y="94.5" width="4" height="4" fill="#e2e2e2" stroke="#b0b0b0"/><path d="M305.5 93V91" fill="none" stroke="#a2a2a2" stroke-width="1" /><path d="M305.5 89.7L303.3 92.4H307.7Z" fill="#a2a2a2" stroke="none" stroke-width="1" /><path d="M305.5 100V102" fill="none" stroke="#a2a2a2" stroke-width="1" /><path d="M305.5 103.3L303.3 100.6H307.7Z" fill="#a2a2a2" stroke="none" stroke-width="1" /><path d="M302 96.5H300" fill="none" stroke="#a2a2a2" stroke-width="1" /><path d="M298.7 96.5L301.4 94.3V98.7Z" fill="#a2a2a2" stroke="none" stroke-width="1" /><path d="M309 96.5H311" fill="none" stroke="#a2a2a2" stroke-width="1" /><path d="M312.3 96.5L309.6 94.3V98.7Z" fill="#a2a2a2" stroke="none" stroke-width="1" /><rect x="332.5" y="94.5" width="3" height="4" fill="#d4d4d4" stroke="#b2b2b2"/><rect x="337.5" y="91.5" width="3" height="10" fill="#d4d4d4" stroke="#b2b2b2"/><rect x="342.5" y="93.5" width="3" height="6" fill="#d4d4d4" stroke="#b2b2b2"/><path d="M332 96.5L346 96.5" stroke="#b2b2b2" stroke-width="1" fill="none"/><rect x="358.5" y="92.5" width="3" height="4" fill="#d4d4d4" stroke="#b2b2b2"/><rect x="363.5" y="89.5" width="3" height="10" fill="#d4d4d4" stroke="#b2b2b2"/><rect x="368.5" y="91.5" width="3" height="6" fill="#d4d4d4" stroke="#b2b2b2"/><path d="M362 101.5H357M359.6 99.1L357 101.5L359.6 103.9" fill="none" stroke="#a6a6a6" stroke-width="1.1" /><path d="M368 101.5H373M370.4 99.1L373 101.5L370.4 103.9" fill="none" stroke="#a6a6a6" stroke-width="1.1" /><rect x="384.5" y="92.5" width="3" height="4" fill="#d4d4d4" stroke="#b2b2b2"/><rect x="389.5" y="89.5" width="3" height="10" fill="#d4d4d4" stroke="#b2b2b2"/><rect x="394.5" y="91.5" width="3" height="6" fill="#d4d4d4" stroke="#b2b2b2"/><path d="M383 101.5H388M385.4 99.1L388 101.5L385.4 103.9" fill="none" stroke="#a6a6a6" stroke-width="1.1" /><path d="M399 101.5H394M396.6 99.1L394 101.5L396.6 103.9" fill="none" stroke="#a6a6a6" stroke-width="1.1" /><rect x="412.5" y="92.5" width="3" height="4" fill="#d4d4d4" stroke="#b2b2b2"/><rect x="415.5" y="89.5" width="3" height="10" fill="#d4d4d4" stroke="#b2b2b2"/><rect x="418.5" y="91.5" width="3" height="6" fill="#d4d4d4" stroke="#b2b2b2"/><path d="M410 101.5H415M412.4 99.1L415 101.5L412.4 103.9" fill="none" stroke="#a6a6a6" stroke-width="1.1" /><path d="M424 101.5H419M421.6 99.1L419 101.5L421.6 103.9" fill="none" stroke="#a6a6a6" stroke-width="1.1" /><path d="M449.5 90L449.5 104" stroke="#b2b2b2" stroke-width="1" fill="none"/><rect x="447.5" y="90.5" width="4" height="3" fill="#d4d4d4" stroke="#b2b2b2"/><rect x="444.5" y="95.5" width="10" height="3" fill="#d4d4d4" stroke="#b2b2b2"/><rect x="446.5" y="100.5" width="6" height="3" fill="#d4d4d4" stroke="#b2b2b2"/><path d="M474.5 90L474.5 104" stroke="#b2b2b2" stroke-width="1" fill="none"/><rect x="472.5" y="90.5" width="4" height="3" fill="#d4d4d4" stroke="#b2b2b2"/><rect x="469.5" y="95.5" width="10" height="3" fill="#d4d4d4" stroke="#b2b2b2"/><rect x="471.5" y="100.5" width="6" height="3" fill="#d4d4d4" stroke="#b2b2b2"/><path d="M481.5 94.5V90M479.1 92.6L481.5 90L483.9 92.6" fill="none" stroke="#a6a6a6" stroke-width="1.1" /><path d="M481.5 99.5V104M479.1 101.4L481.5 104L483.9 101.4" fill="none" stroke="#a6a6a6" stroke-width="1.1" /><path d="M500.5 90L500.5 104" stroke="#b2b2b2" stroke-width="1" fill="none"/><rect x="498.5" y="90.5" width="4" height="3" fill="#d4d4d4" stroke="#b2b2b2"/><rect x="495.5" y="95.5" width="10" height="3" fill="#d4d4d4" stroke="#b2b2b2"/><rect x="497.5" y="100.5" width="6" height="3" fill="#d4d4d4" stroke="#b2b2b2"/><path d="M507.5 90V94.5M505.1 91.9L507.5 94.5L509.9 91.9" fill="none" stroke="#a6a6a6" stroke-width="1.1" /><path d="M507.5 104V99.5M505.1 102.1L507.5 99.5L509.9 102.1" fill="none" stroke="#a6a6a6" stroke-width="1.1" /><path d="M526.5 92L526.5 102" stroke="#b2b2b2" stroke-width="1" fill="none"/><rect x="524.5" y="92.5" width="4" height="3" fill="#d4d4d4" stroke="#b2b2b2"/><rect x="521.5" y="95.5" width="10" height="3" fill="#d4d4d4" stroke="#b2b2b2"/><rect x="523.5" y="98.5" width="6" height="3" fill="#d4d4d4" stroke="#b2b2b2"/><path d="M533.5 90V94.5M531.1 91.9L533.5 94.5L535.9 91.9" fill="none" stroke="#a6a6a6" stroke-width="1.1" /><path d="M533.5 104V99.5M531.1 102.1L533.5 99.5L535.9 102.1" fill="none" stroke="#a6a6a6" stroke-width="1.1" /><rect x="553.5" y="89.5" width="14" height="14" fill="#dadada" stroke="#bcbcbc"/><path d="M554 96.5L567 96.5" stroke="#c4c4c4" stroke-width="1" fill="none"/><path d="M560.5 90L560.5 103" stroke="#cccccc" stroke-width="1" fill="none"/><rect x="558.5" y="92.5" width="4" height="8" fill="#dcdcdc" stroke="#b0b0b0"/><rect x="579.5" y="89.5" width="14" height="14" fill="#dadada" stroke="#bcbcbc"/><path d="M586.5 90L586.5 103" stroke="#c4c4c4" stroke-width="1" fill="none"/><path d="M580 96.5L593 96.5" stroke="#cccccc" stroke-width="1" fill="none"/><rect x="582.5" y="94.5" width="8" height="4" fill="#dcdcdc" stroke="#b0b0b0"/><rect x="613.5" y="90.5" width="6" height="6" fill="#d4d4d4" stroke="#b2b2b2"/><rect x="620.5" y="97.5" width="6" height="6" fill="#d4d4d4" stroke="#b2b2b2"/><rect x="616.5" y="93.5" width="7" height="6" fill="#d0d0d0" stroke="#b2b2b2"/><rect x="643.5" y="93.5" width="6" height="6" fill="#dadada" stroke="#b2b2b2"/><rect x="639.5" y="90.5" width="6" height="6" fill="#d4d4d4" stroke="#b2b2b2"/><rect x="646.5" y="97.5" width="6" height="6" fill="#d4d4d4" stroke="#b2b2b2"/><path d="M698.5 97.7L700.7 99.9" fill="none" stroke="#5878a0" stroke-width="2.4" /><path d="M700.5 99.7L704.1 103.5" fill="none" stroke="#d8861a" stroke-width="2.8" stroke-linecap="round"/><path d="M700.7 99.7L703.9 103.1" fill="none" stroke="#f8d048" stroke-width="1.0" stroke-dasharray="1 0.8"/><circle cx="695.5" cy="94.5" r="4" fill="#dcf2fb" stroke="#6f8db2" stroke-width="1.2"/><path d="M693.0 94.5H698.0" fill="none" stroke="#c0391e" stroke-width="1.2" /><path d="M802.5 97.7L804.7 99.9" fill="none" stroke="#5878a0" stroke-width="2.4" /><path d="M804.5 99.7L808.1 103.5" fill="none" stroke="#d8861a" stroke-width="2.8" stroke-linecap="round"/><path d="M804.7 99.7L807.9 103.1" fill="none" stroke="#f8d048" stroke-width="1.0" stroke-dasharray="1 0.8"/><circle cx="799.5" cy="94.5" r="4" fill="#dcf2fb" stroke="#6f8db2" stroke-width="1.2"/><path d="M797.0 94.5H802.0M799.5 92.0V97.0" fill="none" stroke="#c0391e" stroke-width="1.2" /><path d="M14.5 127.5V144L18.3 140.5L20.8 146.8L23.5 145.7L21 139.6L26 139.4Z" fill="url(#gPtr)" stroke="#50565c" stroke-width="1" stroke-linejoin="round"/><text x="8.9" y="188" font-family="'Liberation Serif',serif" font-size="27.5" font-weight="400" fill="url(#gA)" stroke="url(#gA)" stroke-width="0.7">A</text><rect x="9.5" y="203.5" width="19" height="19" rx="2" fill="#fff" stroke="#4a84d6"/><rect x="11.5" y="205.5" width="15" height="15" fill="url(#gChk)" stroke="#b4bcc8" stroke-width="0.6"/><path d="M13.8 212.6L17.8 217L24.6 209.6" fill="none" stroke="#2a66c8" stroke-width="2.6" /><rect x="10.5" y="235.5" width="17" height="21" fill="url(#gPane)" stroke="#4a84d6"/><text x="14.2" y="246.9" font-family="'Liberation Serif',serif" font-size="13" font-weight="700" fill="#d2601a">A</text><path d="M14 249.5H24M13 251.5H25M15 253.5H23" fill="none" stroke="#8494ac" stroke-width="1" /><rect x="8.5" y="273.5" width="21" height="16" fill="#fff" stroke="#8a9098"/><rect x="10" y="275" width="18" height="13" fill="url(#gSky)"/><circle cx="23" cy="284.5" r="4" fill="url(#gSun)"/><path d="M13.6 288L14.6 282L15.6 278.6" fill="none" stroke="#3a2410" stroke-width="1.2" /><path d="M15.6 278.4L12 277.8L11 279.6M15.6 278.4L13 276.2M15.6 278.4L18 276.4L20 277M15.6 278.4L19 279L20 281.6M15.6 278.6L17 281L16.6 283M15.4 278.6L12.6 280.6L12 283" fill="none" stroke="#3a2410" stroke-width="1" /><rect x="9.5" y="305.5" width="19" height="19" rx="2" fill="url(#gGray)" stroke="#6a727c"/><rect x="12.5" y="308.5" width="13" height="13" fill="none" stroke="#a4acb8" stroke-width="0.8"/><rect x="8.5" y="341.5" width="21" height="16" fill="#fff" stroke="#8a96a8"/><rect x="8.5" y="341.5" width="21" height="4.5" fill="#2e72d2" stroke="#2a68c4"/><path d="M9 346.5H29M9 350.5H29M9 354.5H29M15.5 342V357M22.5 342V357" fill="none" stroke="#9aa4b4" stroke-width="1" /><path d="M10 343.5H14.5M17 343.5H21.5M24 343.5H28.5" fill="none" stroke="#8ab4f0" stroke-width="1.6" /><path d="M11 382L27 398" fill="none" stroke="#505860" stroke-width="1.4" /><rect x="9.5" y="380.5" width="3" height="3" fill="#c8d8f0" stroke="#505860"/><rect x="25.5" y="396.5" width="3" height="3" fill="#c8d8f0" stroke="#505860"/><rect x="9.5" y="414.5" width="12" height="12" fill="url(#gGreen)" stroke="#5a9010"/><circle cx="22" cy="427" r="6.5" fill="url(#gBlueC)" stroke="#3a70c0"/><rect x="8.5" y="449.5" width="21" height="18" fill="#fff" stroke="#6a9ada"/><rect x="11" y="453" width="1" height="11" fill="url(#gBar)"/><rect x="13" y="453" width="2" height="10" fill="url(#gBar)"/><rect x="16" y="453" width="1" height="11" fill="url(#gBar)"/><rect x="18" y="453" width="1" height="10" fill="url(#gBar)"/><rect x="20" y="453" width="2" height="10" fill="url(#gBar)"/><rect x="23" y="453" width="1" height="10" fill="url(#gBar)"/><rect x="25" y="453" width="2" height="11" fill="url(#gBar)"/><rect x="8.5" y="483.5" width="21" height="18" fill="#fff" stroke="#6a9ada"/><path d="M12.5 486.8H16.5M12.5 492.5H16.5M12.5 498.2H16.5" fill="none" stroke="#c4ccd6" stroke-width="1.6" /><path d="M11.8 487.5V491.7M11.8 493.3V497.5" fill="none" stroke="#c4ccd6" stroke-width="1.6" /><path d="M17.2 487.5V491.7M17.2 493.3V497.5" fill="none" stroke="#1a62da" stroke-width="1.6" /><path d="M21.5 486.8H25.5M21.5 492.5H25.5M21.5 498.2H25.5" fill="none" stroke="#1a62da" stroke-width="1.6" /><path d="M20.8 487.5V491.7M20.8 493.3V497.5" fill="none" stroke="#1a62da" stroke-width="1.6" /><path d="M26.2 487.5V491.7M26.2 493.3V497.5" fill="none" stroke="#1a62da" stroke-width="1.6" /><rect x="9.5" y="535.5" width="5" height="7.5" fill="url(#gGr)" stroke="#4e8c0c"/><rect x="16.5" y="524.5" width="5" height="18.5" fill="url(#gOr)" stroke="#c45a0a"/><rect x="23.5" y="529.5" width="5" height="13.5" fill="url(#gBl)" stroke="#3a74cc"/><circle cx="19" cy="567" r="11.5" fill="#fff" stroke="#222" stroke-width="1.1"/><path d="M13.2 572.6A8 8 0 0 1 23.6 560.5" fill="none" stroke="#2a9af8" stroke-width="3.2" /><path d="M26.4 564A8 8 0 0 1 24.6 572.8" fill="none" stroke="#e04a20" stroke-width="3.2" /><path d="M19 567L25.6 560.4" fill="none" stroke="#222" stroke-width="1.4" /><circle cx="19" cy="567" r="1.8" fill="#222"/><rect x="7.5" y="592.5" width="22" height="17" fill="url(#gPane)" stroke="#8090a8"/><path d="M9.5 605L13 601L15 603.8L19 599L21 602L26 597L28 600" fill="none" stroke="#d03a20" stroke-width="1.5" /><rect x="9.5" y="625.5" width="19" height="19" rx="2" fill="url(#gPane)" stroke="#5a8ad8"/><text x="13.6" y="640" font-family="'Liberation Serif',serif" font-size="16" font-weight="400" fill="#d8481a" stroke="#d8481a" stroke-width="0.5">Σ</text><rect x="10.5" y="659.5" width="17" height="19" fill="#a4acb8" stroke="#606a78"/><rect x="13.5" y="662.5" width="11" height="13" fill="#fff" stroke="#7a8494" stroke-width="0.8"/><path d="M15.5 665.5H22.5M15.5 667.5H22.5M15.5 669.5H22.5M15.5 671.5H22.5M15.5 673.5H22.5" fill="none" stroke="#90a0b8" stroke-width="0.9" /><path d="M15 662.5V660.5Q15 658.5 17 658.5H21Q23 658.5 23 660.5V662.5Z" fill="#3a80e0" stroke="#2a68c4" stroke-width="0.8" /><rect x="8.5" y="699.5" width="20" height="20" rx="1.5" fill="url(#gToc)" stroke="#3a72cc"/><path d="M11 704.5H19M20 704.5H21M22.4 704.5H23.2M24 704.5H26" fill="none" stroke="#fff" stroke-width="1" /><path d="M11 706.5H19M20 706.5H21M22.4 706.5H23.2M24 706.5H26" fill="none" stroke="#fff" stroke-width="1" /><path d="M11 708.5H19M20 708.5H21M22.4 708.5H23.2M24 708.5H26" fill="none" stroke="#fff" stroke-width="1" /><path d="M11 710.5H19M20 710.5H21M22.4 710.5H23.2M24 710.5H26" fill="none" stroke="#fff" stroke-width="1" /><path d="M11 712.5H19M20 712.5H21M22.4 712.5H23.2M24 712.5H26" fill="none" stroke="#fff" stroke-width="1" /><path d="M11 714.5H19M20 714.5H21M22.4 714.5H23.2M24 714.5H26" fill="none" stroke="#fff" stroke-width="1" /><rect x="1019.5" y="153.5" width="15" height="11" rx="1.2" fill="url(#gPane)" stroke="#5c7c9c"/><rect x="1024.4" y="155.4" width="5.4" height="7.2" rx="2" fill="#ffc468" stroke="#e07e0c" stroke-width="1"/><rect x="1037.5" y="171.5" width="15" height="12" rx="0.8" fill="#fff" stroke="#7590ac"/><path d="M1038 177.5H1052M1038 180.5H1052M1042.5 175V183M1047.5 175V183" fill="none" stroke="#8a9cb0" stroke-width="1" /><rect x="1037.5" y="171.5" width="15" height="3.2" rx="0.8" fill="#ffc248" stroke="#e0800e"/><rect x="1037.5" y="189.5" width="15" height="12" rx="0.8" fill="#fff" stroke="#7590ac"/><path d="M1038 195.5H1052M1038 198.5H1052M1042.5 193V201M1047.5 193V201" fill="none" stroke="#8a9cb0" stroke-width="1" /><rect x="1037.5" y="189.5" width="15" height="3.2" rx="0.8" fill="#ffc248" stroke="#e0800e"/><rect x="1037.5" y="207.5" width="15" height="12" rx="0.8" fill="#fff" stroke="#7590ac"/><path d="M1038 213.5H1052M1038 216.5H1052M1042.5 211V219M1047.5 211V219" fill="none" stroke="#8a9cb0" stroke-width="1" /><rect x="1037.5" y="207.5" width="15" height="3.2" rx="0.8" fill="#ffc248" stroke="#e0800e"/><rect x="1037.5" y="225.5" width="15" height="12" rx="0.8" fill="#fff" stroke="#7590ac"/><path d="M1038 231.5H1052M1038 234.5H1052M1042.5 229V237M1047.5 229V237" fill="none" stroke="#8a9cb0" stroke-width="1" /><rect x="1037.5" y="225.5" width="15" height="3.2" rx="0.8" fill="#ffc248" stroke="#e0800e"/><rect x="1037.5" y="243.5" width="15" height="12" rx="0.8" fill="#fff" stroke="#7590ac"/><path d="M1038 249.5H1052M1038 252.5H1052M1042.5 247V255M1047.5 247V255" fill="none" stroke="#8a9cb0" stroke-width="1" /><rect x="1037.5" y="243.5" width="15" height="3.2" rx="0.8" fill="#ffc248" stroke="#e0800e"/><rect x="1037.5" y="261.5" width="15" height="12" rx="0.8" fill="#fff" stroke="#7590ac"/><path d="M1038 267.5H1052M1038 270.5H1052M1042.5 265V273M1047.5 265V273" fill="none" stroke="#8a9cb0" stroke-width="1" /><rect x="1037.5" y="261.5" width="15" height="3.2" rx="0.8" fill="#ffc248" stroke="#e0800e"/><rect x="1019.5" y="277.5" width="15" height="13" fill="#fff" stroke="#7590ac"/><rect x="1019.5" y="277.5" width="15" height="3" fill="#ffc248" stroke="#e0800e"/><text x="1023.6" y="289.8" font-family="'Liberation Sans',sans-serif" font-size="9.5" font-weight="700" fill="#2a62c4">?</text><rect x="1012.8" y="418.2" width="9.6" height="11.2" fill="#fff" stroke="#a85a14" stroke-width="1.5"/><rect x="1014.6" y="415.4" width="5.6" height="4" rx="1.4" fill="#3a90f0"/><circle cx="1024.6" cy="425.2" r="3.4" fill="#f8c040" stroke="#e09018" stroke-width="0.9"/><rect x="1017.3" y="425.1" width="6.4" height="6.4" fill="#58c030" stroke="#2c8c10"/><defs><linearGradient id="gCyl" x1="0" y1="0" x2="1" y2="0"><stop offset="0" stop-color="#fde68c"/><stop offset="1" stop-color="#e8a41c"/></linearGradient></defs><path d="M1131.5 418.5V427.3Q1131.5 429.5 1136 429.5Q1140.5 429.5 1140.5 427.3V418.5Q1140.5 416.4 1136 416.4Q1131.5 416.4 1131.5 418.5Z" fill="url(#gCyl)" stroke="#d89818"/><ellipse cx="1136" cy="418.6" rx="4.2" ry="1.8" fill="#fff2b8" stroke="#e0a428" stroke-width="0.7"/><rect x="1137.8" y="421.9" width="8.8" height="4" fill="#fff" stroke="#444"/><rect x="1137.8" y="427.5" width="8.8" height="4" fill="#fff" stroke="#444"/><rect x="1006.5" y="508.5" width="6" height="6" rx="1.2" fill="#fff6ee" stroke="#1a80f8" stroke-width="1.2"/><path d="M1008 511.5H1011M1009.5 510V513" fill="none" stroke="#111" stroke-width="1.1" /><path d="M1014 510.5H1018" fill="none" stroke="#111" stroke-width="1.2" /><rect x="1006.5" y="517.5" width="6" height="6" rx="1.2" fill="#fff6ee" stroke="#1a80f8" stroke-width="1.2"/><path d="M1008 520.5H1011M1009.5 519V522" fill="none" stroke="#111" stroke-width="1.1" /><path d="M1014 519.5H1018" fill="none" stroke="#111" stroke-width="1.2" /><path d="M1014 512.5H1018M1019 512.5H1022M1014 514.5H1018M1019 514.5H1022M1014 516.5H1018M1019 516.5H1022" fill="none" stroke="#808080" stroke-width="1" /><path d="M1014 521.5H1018M1019 521.5H1022M1014 523.5H1018M1019 523.5H1022" fill="none" stroke="#808080" stroke-width="1" /><text x="1033" y="514.6" font-family="'Liberation Sans',sans-serif" font-size="9.2" font-weight="700" fill="#1a6ae8" stroke="#1a6ae8" stroke-width="0.3">A</text><text x="1033.2" y="522.9" font-family="'Liberation Sans',sans-serif" font-size="9.2" font-weight="700" fill="#9a1010" stroke="#9a1010" stroke-width="0.3">Z</text><path d="M1044.5 508V519" fill="none" stroke="#000" stroke-width="1.1" /><path d="M1041.8 517.3H1047.2L1044.5 523.2Z" fill="#000" stroke="none" stroke-width="1" /><path d="M47.2 762.2H59.4V750.2Z" fill="#f8c868" stroke="#e8901c" stroke-width="1.5" stroke-linejoin="round"/><path d="M54.4 760.2H57.4V756.4Z" fill="#0072c6" stroke="#e8901c" stroke-width="0.8" /><path d="M48.6 754.4L54.4 762.4" fill="none" stroke="#e8a050" stroke-width="2.6" /><path d="M47 752.2L48.8 754.6" fill="none" stroke="#f07090" stroke-width="2.8" /><path d="M54.2 762.2L55.6 764.2" fill="none" stroke="#1a1a1a" stroke-width="1.8" /><rect x="131.5" y="749.5" width="9.6" height="12.6" fill="#f2f3f6" stroke="#d8dce4" stroke-width="0.8"/><path d="M138.8 759.4L135 763.6" fill="none" stroke="#c87830" stroke-width="2" /><circle cx="140.6" cy="757.2" r="2.7" fill="#eaf2fb" stroke="#4a5666" stroke-width="1.2"/><rect x="203.5" y="750.5" width="8.6" height="12.6" fill="#f2f3f6" stroke="#d8dce4" stroke-width="0.8"/><circle cx="202.6" cy="754.8" r="3" fill="#48a848" stroke="#2a70c0" stroke-width="1"/><path d="M201 753.4Q202.6 752.4 204 753.6" fill="none" stroke="#c8e8ff" stroke-width="0.9" /><path d="M209.8 758.8L206 763.4" fill="none" stroke="#c87830" stroke-width="2" /><circle cx="211.4" cy="756.6" r="2.8" fill="#eaf2fb" stroke="#4a5666" stroke-width="1.2"/><rect x="300.8" y="749.6" width="10" height="12.4" rx="0.8" fill="#f4f5f8" stroke="#d8dce4" stroke-width="0.8"/><text x="303.2" y="759.6" font-family="'Liberation Sans',sans-serif" font-size="9" font-weight="700" fill="#3a4a60">{}</text><path d="M299.8 754.6L305.4 762.2" fill="none" stroke="#e89030" stroke-width="2.6" /><path d="M298.4 752.6L300 754.8" fill="none" stroke="#f07090" stroke-width="2.8" /><path d="M305.2 762L306.4 763.8" fill="none" stroke="#1a1a1a" stroke-width="1.8" /></svg>
</div></body></html>
